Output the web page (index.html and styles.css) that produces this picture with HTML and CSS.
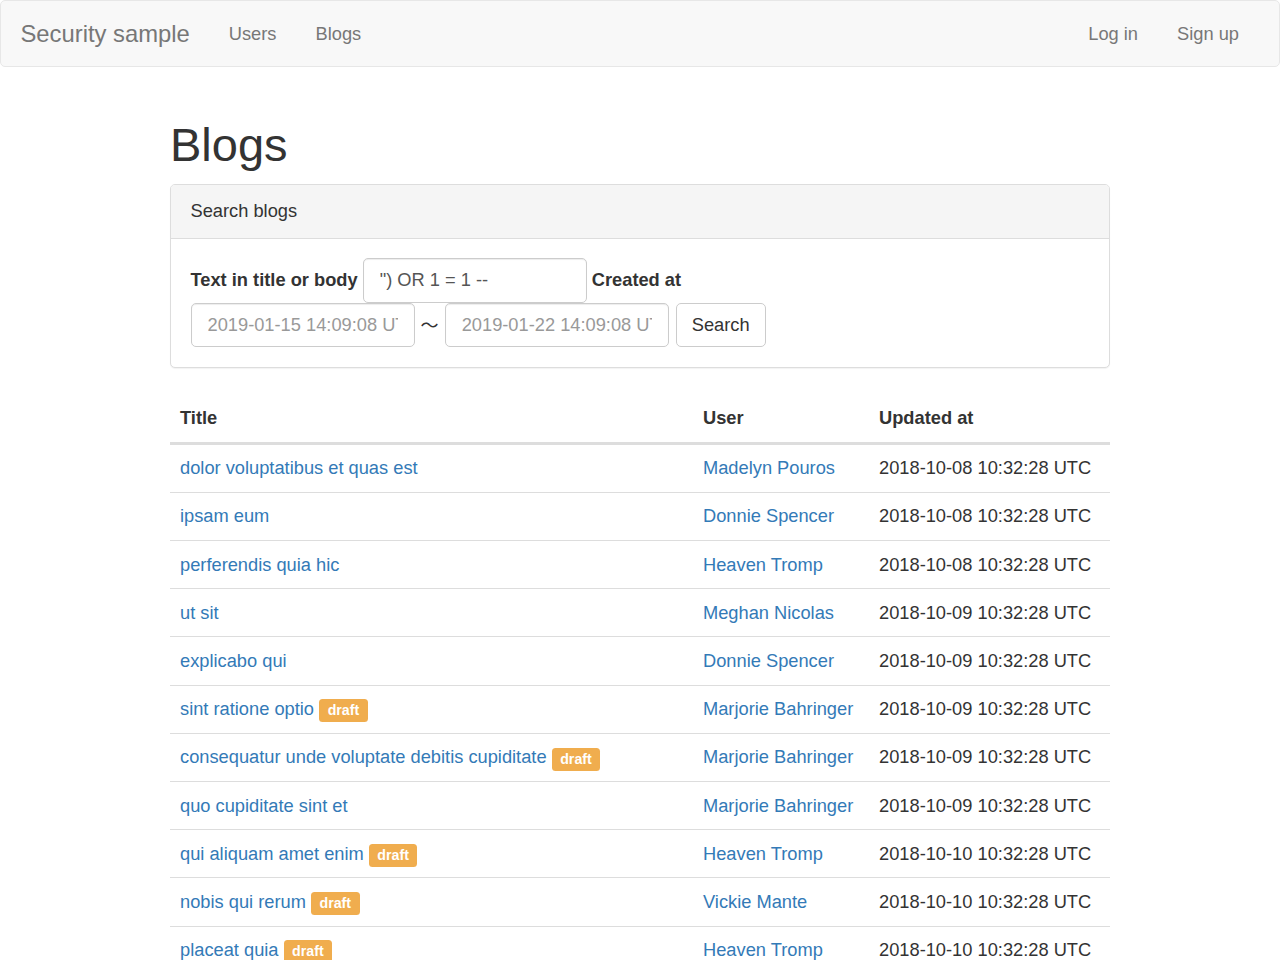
FILE: index.html
```html
<!DOCTYPE html>
<html lang="en">
<head>
<meta charset="utf-8">
<title>Blogs</title>
<link rel="stylesheet" href="styles.css">
</head>
<body>
<nav class="navbar">
  <div class="nav-left">
    <a class="brand" href="#">Security sample</a>
    <ul class="nav">
      <li><a href="#">Users</a></li>
      <li><a href="#">Blogs</a></li>
    </ul>
  </div>
  <ul class="nav">
    <li><a href="#">Log in</a></li>
    <li><a href="#">Sign up</a></li>
  </ul>
</nav>

<main class="container">
  <h1 class="page-title">Blogs</h1>

  <section class="panel">
    <div class="panel-heading">Search blogs</div>
    <div class="panel-body">
      <form class="search-form"><label class="form-label">Text in title or body</label> <input class="form-control text-input" type="text" value="&quot;) OR 1 = 1 --"> <label class="form-label">Created at</label> <span class="range"><input class="form-control date-input" type="text" placeholder="2019-01-15 14:09:08 UTC"> <span class="tilde">〜</span> <input class="form-control date-input" type="text" placeholder="2019-01-22 14:09:08 UTC"></span> <button class="btn" type="button">Search</button></form>
    </div>
  </section>

  <table class="table">
    <thead>
      <tr><th>Title</th><th class="col-user">User</th><th class="col-updated">Updated at</th></tr>
    </thead>
    <tbody>
      <tr><td><a href="#">dolor voluptatibus et quas est</a></td><td><a href="#">Madelyn Pouros</a></td><td>2018-10-08 10:32:28 UTC</td></tr>
      <tr><td><a href="#">ipsam eum</a></td><td><a href="#">Donnie Spencer</a></td><td>2018-10-08 10:32:28 UTC</td></tr>
      <tr><td><a href="#">perferendis quia hic</a></td><td><a href="#">Heaven Tromp</a></td><td>2018-10-08 10:32:28 UTC</td></tr>
      <tr><td><a href="#">ut sit</a></td><td><a href="#">Meghan Nicolas</a></td><td>2018-10-09 10:32:28 UTC</td></tr>
      <tr><td><a href="#">explicabo qui</a></td><td><a href="#">Donnie Spencer</a></td><td>2018-10-09 10:32:28 UTC</td></tr>
      <tr><td><a href="#">sint ratione optio</a> <span class="label">draft</span></td><td><a href="#">Marjorie Bahringer</a></td><td>2018-10-09 10:32:28 UTC</td></tr>
      <tr><td><a href="#">consequatur unde voluptate debitis cupiditate</a> <span class="label">draft</span></td><td><a href="#">Marjorie Bahringer</a></td><td>2018-10-09 10:32:28 UTC</td></tr>
      <tr><td><a href="#">quo cupiditate sint et</a></td><td><a href="#">Marjorie Bahringer</a></td><td>2018-10-09 10:32:28 UTC</td></tr>
      <tr><td><a href="#">qui aliquam amet enim</a> <span class="label">draft</span></td><td><a href="#">Heaven Tromp</a></td><td>2018-10-10 10:32:28 UTC</td></tr>
      <tr><td><a href="#">nobis qui rerum</a> <span class="label">draft</span></td><td><a href="#">Vickie Mante</a></td><td>2018-10-10 10:32:28 UTC</td></tr>
      <tr><td><a href="#">placeat quia</a> <span class="label">draft</span></td><td><a href="#">Heaven Tromp</a></td><td>2018-10-10 10:32:28 UTC</td></tr>
    </tbody>
  </table>
</main>
</body>
</html>
```

FILE: styles.css
```css
* { box-sizing: border-box; }

html, body {
  margin: 0;
  padding: 0;
}

body {
  font-family: "Liberation Sans", Arial, Helvetica, sans-serif;
  font-size: 18.28px;
  line-height: 1.42857;
  color: #333;
  background: #fff;
}

a {
  color: #337ab7;
  text-decoration: none;
}

/* Navbar */
.navbar {
  display: flex;
  justify-content: space-between;
  align-items: stretch;
  height: 67px;
  background: #f8f8f8;
  border: 1px solid #e7e7e7;
  border-radius: 5px;
  padding: 0 20.5px 0 0;
  margin-bottom: 26px;
}

.nav-left {
  display: flex;
  align-items: stretch;
}

.brand {
  display: block;
  padding: 19.5px 19.5px;
  font-size: 23.8px;
  line-height: 26px;
  height: 65px;
  color: #777;
}

.nav {
  display: flex;
  list-style: none;
  margin: 0;
  padding: 0;
}

.nav a {
  display: block;
  padding: 19.5px 19.5px;
  line-height: 26px;
  color: #777;
}

/* Container */
.container {
  display: flow-root;
  width: 940px;
  margin: 0 auto;
}

.page-title {
  font-size: 47px;
  font-weight: 500;
  line-height: 1.1;
  margin: 26px 0 13px;
  color: #333;
}

/* Panel */
.panel {
  border: 1px solid #ddd;
  border-radius: 5px;
  background: #fff;
  box-shadow: 0 1px 1px rgba(0, 0, 0, 0.05);
  margin-bottom: 26px;
}

.panel-heading {
  background: #f5f5f5;
  border-bottom: 1px solid #ddd;
  border-radius: 4px 4px 0 0;
  padding: 13.5px 19.5px;
  line-height: 26px;
  color: #333;
}

.panel-body {
  padding: 19.5px 19.5px 20.5px;
}

.search-form {
  margin: 0;
}

.form-label {
  display: inline-block;
  font-weight: 700;
  vertical-align: middle;
  margin-bottom: 1px;
}

.form-control {
  display: inline-block;
  vertical-align: middle;
  height: 44.4px;
  padding: 8px 16px;
  font-family: inherit;
  font-size: 18.28px;
  line-height: 1.42857;
  color: #555;
  background: #fff;
  border: 1px solid #ccc;
  border-radius: 5px;
  box-shadow: inset 0 1px 1px rgba(0, 0, 0, 0.075);
}

.form-control::placeholder {
  color: #999;
  opacity: 1;
}

.text-input {
  width: 224px;
}

.date-input {
  width: 224px;
}

.range {
  display: inline-block;
  vertical-align: middle;
  white-space: nowrap;
}

.tilde {
  display: inline-block;
  vertical-align: middle;
  font-family: "Noto Sans CJK JP", sans-serif;
  font-size: 18px;
  margin: 0 1px;
  color: #333;
}

.btn {
  display: inline-block;
  vertical-align: middle;
  margin-left: 2px;
  height: 44.4px;
  padding: 8px 15px;
  font-family: inherit;
  font-size: 18.28px;
  line-height: 1.42857;
  color: #333;
  background: #fff;
  border: 1px solid #ccc;
  border-radius: 5px;
  cursor: pointer;
}

/* Table */
.table {
  width: 100%;
  border-collapse: collapse;
  border-spacing: 0;
}

.table th,
.table td {
  text-align: left;
  padding: 10.6px 10px;
  line-height: 26px;
  vertical-align: top;
}

.table th {
  font-weight: 700;
  border-bottom: 3px solid #ddd;
}

.table td {
  border-top: 1px solid #ddd;
}

.col-user {
  width: 176px;
}

.col-updated {
  width: 241px;
}

.label {
  display: inline;
  padding: 0.2em 0.6em 0.3em;
  font-size: 14.2px;
  font-weight: 700;
  line-height: 1;
  color: #fff;
  background: #f0ad4e;
  border-radius: 0.25em;
  white-space: nowrap;
  vertical-align: baseline;
  text-align: center;
}
```
